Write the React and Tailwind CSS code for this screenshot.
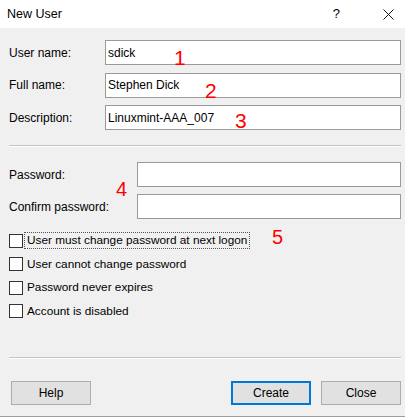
import React from "react";

const font = { fontFamily: '"Liberation Sans", Arial, sans-serif' };

function Field({ label, value, labelW }) {
  return (
    <div className="flex items-center h-[25px]">
      <div className={`${labelW} shrink-0 text-[12px] text-black`}>{label}</div>
      <div className="flex-1 h-[25px] bg-white border border-[#9a9a9a] flex items-center pl-[2px] text-[12px] text-black">
        {value}
      </div>
    </div>
  );
}

function Check({ label, focused }) {
  return (
    <div className="flex items-center h-[23.5px]">
      <div className="w-[14px] h-[14px] bg-white border border-[#333] shrink-0" />
      <div
        className={`ml-[1px] px-[2px] leading-[15px] text-[11.8px] text-black border ${
          focused ? "border-dotted border-[#555]" : "border-transparent"
        }`}
      >
        {label}
      </div>
    </div>
  );
}

function Btn({ children, primary }) {
  return (
    <div
      className={`w-[80px] h-[24px] flex items-center justify-center bg-[#e1e1e1] text-[12px] text-black ${
        primary ? "border-2 border-[#0078d7]" : "border border-[#adadad]"
      }`}
    >
      {children}
    </div>
  );
}

export default function App() {
  return (
    <div className="relative w-[407px] h-[419px] bg-white overflow-hidden" style={font}>
      {/* Title bar */}
      <div className="h-[28px] flex items-center pl-[7px] pr-[13px]">
        <div className="text-[12.5px] text-black flex-1">New User</div>
        <div className="text-[13px] text-black mr-[43px]">?</div>
        <svg width="11" height="11" viewBox="0 0 11 11" className="mt-[1px]">
          <path d="M0.5 0.5 L10.5 10.5 M10.5 0.5 L0.5 10.5" stroke="#111" strokeWidth="1" />
        </svg>
      </div>

      {/* Body */}
      <div className="w-[405px] h-[389px] bg-[#f0f0f0] border-b border-[#a0a0a0] pl-[9px] pr-[4px] pt-[12px] flex flex-col">
        <div className="flex flex-col gap-[7.5px]">
          <Field label="User name:" value="sdick" labelW="w-[96px]" />
          <Field label="Full name:" value="Stephen Dick" labelW="w-[96px]" />
          <Field label="Description:" value="Linuxmint-AAA_007" labelW="w-[96px]" />
        </div>

        <div className="mt-[15px] h-[2px] border-t border-[#c4c4c4] border-b border-b-white" />

        <div className="mt-[15px] flex flex-col gap-[7px]">
          <Field label="Password:" value="" labelW="w-[128px]" />
          <Field label="Confirm password:" value="" labelW="w-[128px]" />
        </div>

        <div className="mt-[10px] flex flex-col">
          <Check label="User must change password at next logon" focused />
          <Check label="User cannot change password" />
          <Check label="Password never expires" />
          <Check label="Account is disabled" />
        </div>

        <div className="mt-[34px] h-[2px] border-t border-[#c4c4c4] border-b border-b-white" />

        <div className="mt-[22px] flex items-center pl-[2px]">
          <Btn>Help</Btn>
          <div className="flex-1" />
          <Btn primary>Create</Btn>
          <div className="w-[10px]" />
          <Btn>Close</Btn>
        </div>
      </div>

      {/* Red annotations */}
      <div className="absolute left-[174px] top-[47px] text-[21px] leading-none text-[#ff0000]">1</div>
      <div className="absolute left-[205px] top-[80px] text-[21px] leading-none text-[#ff0000]">2</div>
      <div className="absolute left-[235px] top-[110px] text-[21px] leading-none text-[#ff0000]">3</div>
      <div className="absolute left-[116px] top-[179px] text-[20px] leading-none text-[#ff0000]">4</div>
      <div className="absolute left-[272px] top-[227px] text-[20px] leading-none text-[#ff0000]">5</div>
    </div>
  );
}
